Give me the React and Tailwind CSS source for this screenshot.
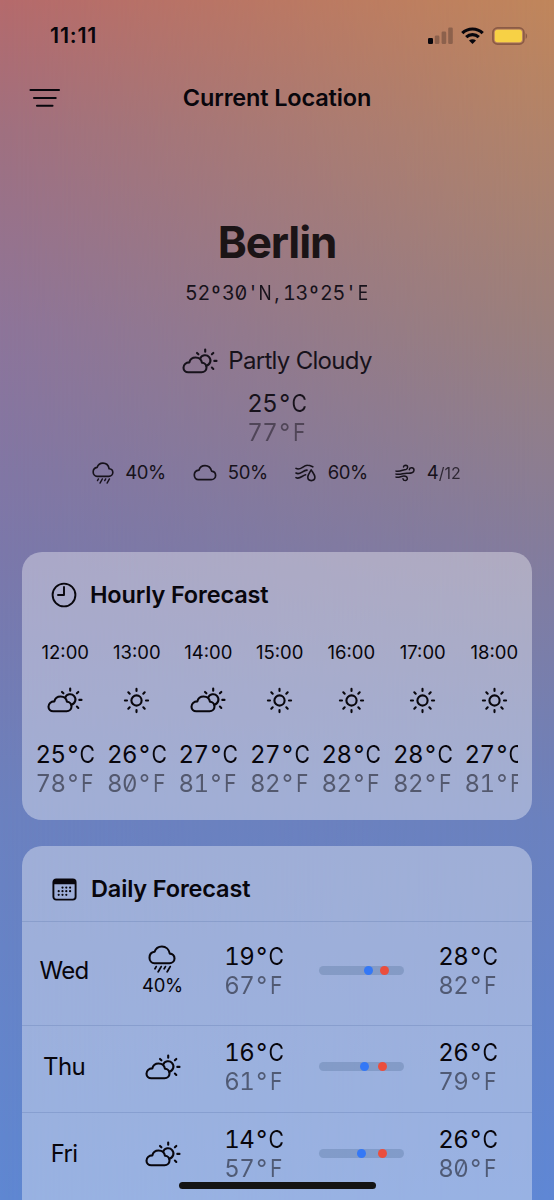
import { clsx } from 'clsx';

const current = {
  city: 'Berlin',
  coords: "52º30'N,13º25'E",
  condition: 'Partly Cloudy',
  c: 25,
  f: 77
};

const hours = [
  { time: '12:00', icon: 'partly', c: 25, f: 78 },
  { time: '13:00', icon: 'sun', c: 26, f: 80 },
  { time: '14:00', icon: 'partly', c: 27, f: 81 },
  { time: '15:00', icon: 'sun', c: 27, f: 82 },
  { time: '16:00', icon: 'sun', c: 28, f: 82 },
  { time: '17:00', icon: 'sun', c: 28, f: 82 },
  { time: '18:00', icon: 'sun', c: 27, f: 81 }
];

const days = [
  { name: 'Wed', icon: 'rain', chance: '40%', low: [19, 67], high: [28, 82], range: [53, 72.6] },
  { name: 'Thu', icon: 'partly', low: [16, 61], high: [26, 79], range: [48.6, 70] },
  { name: 'Fri', icon: 'partly', low: [14, 57], high: [26, 80], range: [45.8, 70.4] }
];

const stroke = {
  fill: 'none',
  stroke: 'currentColor',
  strokeWidth: 2.1,
  strokeLinecap: 'round',
  strokeLinejoin: 'round'
};

function PartlyCloudyIcon() {
  return (
    <svg width="36" height="26" viewBox="0 0 36 26" {...stroke} className="shrink-0">
      <path d="M6.2 24.2H19.6C22.4 24.2 24.5 22.1 24.5 19.5C24.5 17 22.6 15 20 14.8C19.4 11.7 16.8 9.5 13.6 9.5C10.4 9.5 8 11.5 7.3 14.4C3.9 14.5 1.5 16.6 1.5 19.7C1.5 22.3 3.6 24.2 6.2 24.2Z" />
      <path d="M18.2 10.6A5.3 5.3 0 1 1 24.3 17.7" />
      <path d="M23.2 1.6V3.7M15 4.9L16.4 6.3M31.3 4.9L29.9 6.3M32.3 12.9H34.5M29.9 19.5L31.3 20.9" />
    </svg>
  );
}

function SunIcon() {
  return (
    <svg width="27" height="27" viewBox="0 0 27 27" {...stroke}>
      <circle cx="13.5" cy="13.5" r="5.1" />
      <path d="M13.5 1.9V4M13.5 23V25.1M1.9 13.5H4M23 13.5H25.1M5.3 5.3L6.7 6.7M20.3 20.3L21.7 21.7M5.3 21.7L6.7 20.3M20.3 6.7L21.7 5.3" />
    </svg>
  );
}

function RainIcon({ small }) {
  return (
    <svg width={small ? 22 : 28} height={small ? 22 : 28} viewBox="0 0 28 28" {...stroke}>
      <path d="M6.4 18.2H21.4C24.2 18.2 26.5 16.1 26.5 13.4C26.5 10.7 24.4 8.8 21.8 8.6C21 4.4 17.8 1.5 13.9 1.5C10.3 1.5 7.6 3.7 6.6 6.8C3.5 7.2 1.5 9.5 1.5 12.7C1.5 15.8 3.7 18.2 6.4 18.2Z" />
      <path d="M8.2 21.6L7 23.7M13.2 21.6L10.2 26.8M17.4 21.6L16.2 23.7M22.2 21.6L19.2 26.8" strokeWidth="1.8" />
    </svg>
  );
}

function CloudIcon() {
  return (
    <svg width="24" height="18" viewBox="0 0 24 18" {...stroke} strokeWidth="1.7">
      <path d="M5.4 15.6H18.1C20.7 15.6 22.6 13.8 22.6 11.4C22.6 9.1 20.9 7.4 18.6 7.1C17.8 3.8 15.1 1.6 12 1.6C9.1 1.6 6.7 3.4 5.9 6.2C3.1 6.5 1.3 8.4 1.3 11.1C1.3 13.7 3.2 15.6 5.4 15.6Z" />
    </svg>
  );
}

function HumidityIcon() {
  return (
    <svg width="21" height="18" viewBox="0 0 21 18" {...stroke} strokeWidth="1.6">
      <path d="M1 4.4C5.5 7.2 8 1.2 12.5 1.3C14.8 1.3 16 2 17.8 2.8" />
      <path d="M1 9C5 11.6 7.5 6.3 12 6.1" />
      <path d="M1 13.6C4.5 15.8 7 11.6 10.6 10.7" />
      <path d="M16.2 5.9C14.6 8.7 12.8 10.8 12.8 13.1C12.8 15.2 14.2 16.6 16.3 16.6C18.4 16.6 19.9 15.2 19.9 13.1C19.9 10.8 17.9 8.7 16.2 5.9Z" />
    </svg>
  );
}

function WindIcon() {
  return (
    <svg width="20" height="18" viewBox="0 0 20 18" {...stroke} strokeWidth="1.5">
      <path d="M1 7.1C5 8.2 8 5.6 11 5.4C13 5.1 13.4 1.3 10.7 1.2C9.4 1.2 8.7 1.9 8.5 2.9" />
      <path d="M1 10.1C5 11.2 8.5 9 12 9.2C16 9.5 19 8.7 19 6.3C19 3.2 14.8 3.1 14.3 5.7" />
      <path d="M1 13.1C4 14 6 12 9 12C13.4 12 13 16.6 10.3 16.6C9 16.6 8.2 15.8 8 14.8" />
    </svg>
  );
}

function ClockIcon() {
  return (
    <svg width="26" height="26" viewBox="0 0 26 26" {...stroke} strokeWidth="1.9">
      <circle cx="13" cy="13" r="11.4" />
      <path d="M13 5V13H7" />
    </svg>
  );
}

function CalendarIcon() {
  const dots = [
    [10.5, 9.6], [14.3, 9.6], [18.1, 9.6],
    [6.7, 13.2], [10.5, 13.2], [14.3, 13.2], [18.1, 13.2],
    [6.7, 16.8], [10.5, 16.8], [14.3, 16.8]
  ];
  return (
    <svg width="25" height="23" viewBox="0 0 25 23">
      <rect x="1.4" y="1.4" width="22.2" height="20.2" rx="2.8" {...stroke} strokeWidth="1.9" />
      <path d="M1.4 6.2V4A2.8 2.8 0 0 1 4.2 1.2H20.8A2.8 2.8 0 0 1 23.6 4V6.2Z" fill="currentColor" />
      {dots.map(([x, y]) => (
        <circle key={`${x}-${y}`} cx={x} cy={y} r="1.1" fill="currentColor" />
      ))}
    </svg>
  );
}

function WeatherIcon({ name }) {
  if (name === 'sun') return <SunIcon />;
  if (name === 'rain') return <RainIcon />;
  return <PartlyCloudyIcon />;
}

// Tabular digits flow as they are, every other character gets a cell of the same width
function Mono({ text }) {
  return (
    <span className="tracking-[-0.02em] whitespace-nowrap [font-feature-settings:'tnum','zero']">
      {text.split(/([^0-9])/).filter(Boolean).map((part, i) =>
        /[0-9]/.test(part) ? part : (
          <span key={i} className={clsx('inline-flex w-[0.61em] justify-center tracking-normal', /[A-Z]/.test(part) && 'scale-x-88')}>
            {part}
          </span>
        )
      )}
    </span>
  );
}

function Temperature({ c, f }) {
  return (
    <div className="text-[24px] leading-[29px]">
      <div><Mono text={`${c}°C`} /></div>
      <div className="opacity-50"><Mono text={`${f}°F`} /></div>
    </div>
  );
}

function StatusBar() {
  return (
    <div className="flex h-[71px] items-center justify-between pr-[26px] pl-[50px]">
      <span className="text-[21.5px] font-semibold tracking-[0.8px]">11:11</span>
      <div className="flex items-center">
        <svg width="25" height="17" viewBox="0 0 25 17" fill="currentColor">
          <rect x="0" y="11" width="5" height="6" rx="1.3" />
          <g opacity="0.25">
            <rect x="6.8" y="8.5" width="4.6" height="8.5" rx="1.3" />
            <rect x="13.6" y="4.5" width="4.6" height="12.5" rx="1.3" />
            <rect x="20.2" y="0.5" width="4.6" height="16.5" rx="1.3" />
          </g>
        </svg>
        <svg width="23" height="17" viewBox="0 0 23 17" className="ml-2" fill="none" stroke="currentColor" strokeWidth="3.2">
          <path d="M1.3 6.2C7 0.6 16 0.6 21.7 6.2" />
          <path d="M5.2 10.2C8.8 6.8 14.2 6.8 17.8 10.2" />
          <path d="M11.5 17L8 13.4C10 11.7 13 11.7 15 13.4Z" fill="currentColor" stroke="none" />
        </svg>
        <svg width="36" height="18" viewBox="0 0 36 18" className="ml-2">
          <rect x="0.9" y="0.9" width="31" height="16.2" rx="4.6" fill="none" stroke="#8b5b45" strokeWidth="1.7" />
          <rect x="2.8" y="2.7" width="27.2" height="12.6" rx="2.8" fill="#f7d145" />
          <path d="M33.6 6.2C35.6 7 35.6 11 33.6 11.8Z" fill="#8b5b45" />
        </svg>
      </div>
    </div>
  );
}

function Header() {
  return (
    <header className="grid h-[54px] grid-cols-[1fr_auto_1fr] items-center px-[29px]">
      <svg width="32" height="20" viewBox="0 0 32 20" {...stroke}>
        <path d="M1.5 2H30M5 10H26.7M8 17.7H23.5" />
      </svg>
      <h1 className="text-[23.5px] font-semibold tracking-[-0.15px]">Current Location</h1>
    </header>
  );
}

function CurrentWeather() {
  return (
    <section className="flex flex-col items-center text-[#17121b]">
      <h2 className="mt-[89px] text-[44px] leading-[56px] font-bold tracking-[-1.1px] text-[#1b1416]">{current.city}</h2>
      <p className="mt-[11px] text-[19.8px] leading-[24px]"><Mono text={current.coords} /></p>
      <div className="mt-[40px] flex h-8 items-center gap-[10px]">
        <PartlyCloudyIcon />
        <span className="text-[24px] tracking-[-0.7px]">{current.condition}</span>
      </div>
      <div className="mt-[12px]">
        <Temperature c={current.c} f={current.f} />
      </div>
      <div className="mt-[14px] flex h-6 items-center gap-[27px] pr-px text-[18.5px] tracking-[-0.4px]">
        <span className="flex items-center gap-[11px]"><RainIcon small />40%</span>
        <span className="flex items-center gap-[11px]"><CloudIcon />50%</span>
        <span className="flex items-center gap-3"><HumidityIcon />60%</span>
        <span className="flex items-center gap-3">
          <WindIcon />
          <span className="tracking-normal">4<span className="text-[16px] opacity-80">/12</span></span>
        </span>
      </div>
    </section>
  );
}

function HourlyForecast() {
  return (
    <section className="mx-[22px] mt-[67px] h-[268px] rounded-[20px] bg-white/36">
      <div className="flex h-[86px] items-center gap-[13px] pl-[29px]">
        <ClockIcon />
        <h3 className="text-[23.5px] font-semibold tracking-[-0.15px]">Hourly Forecast</h3>
      </div>
      <div className="mr-[14px] ml-[7.5px] flex overflow-hidden">
        {hours.map((hour) => (
          <div key={hour.time} className="flex w-[71.5px] shrink-0 flex-col items-center">
            <div className="h-7 text-[18.5px] leading-7">{hour.time}</div>
            <div className="mt-[14px] mb-[20px] flex h-10 items-center">
              <WeatherIcon name={hour.icon} />
            </div>
            <Temperature c={hour.c} f={hour.f} />
          </div>
        ))}
      </div>
    </section>
  );
}

function RangeBar({ range }) {
  return (
    <div className="relative -mt-0.5 h-[9px] w-[85px] rounded-full bg-[#3c5a82]/25">
      <span className="absolute top-0 size-[9px] rounded-full bg-[#3478f6]" style={{ left: `${range[0]}%` }} />
      <span className="absolute top-0 size-[9px] rounded-full bg-[#eb4e3d]" style={{ left: `${range[1]}%` }} />
    </div>
  );
}

function DailyForecast() {
  return (
    <section className="mx-[22px] mt-[26px] h-[380px] rounded-t-[20px] bg-white/36">
      <div className="flex h-[75px] items-center gap-[14px] pt-[11px] pl-[30px]">
        <CalendarIcon />
        <h3 className="text-[23.5px] font-semibold tracking-[-0.15px]">Daily Forecast</h3>
      </div>
      {days.map((day) => (
        <div
          key={day.name}
          className={clsx(
            'grid grid-cols-[84px_112px_72px_142px_72px] items-center justify-items-center border-t border-[#3c5a96]/20',
            day.chance ? 'h-[104px] pb-[5px]' : 'h-[87px] pb-1'
          )}
        >
          <div className="text-[24px] tracking-[-0.7px]">{day.name}</div>
          <div className="flex flex-col items-center pl-px">
            <WeatherIcon name={day.icon} />
            {day.chance && <span className="text-[18.5px] leading-[25px] tracking-[-0.3px]">{day.chance}</span>}
          </div>
          <Temperature c={day.low[0]} f={day.low[1]} />
          <RangeBar range={day.range} />
          <Temperature c={day.high[0]} f={day.high[1]} />
        </div>
      ))}
    </section>
  );
}

export default function App() {
  return (
    <div className="relative isolate h-[1200px] w-[554px] overflow-hidden bg-[linear-gradient(180deg,#b56a6c_0px,#a07080_130px,#8d759a_330px,#7b78aa_550px,#6b81c0_820px,#5f87d2_1200px)] font-['Inter',sans-serif] text-[#08060c]">
      <div className="absolute inset-0 -z-10 bg-[linear-gradient(180deg,#c0865b_0px,#b0836a_140px,#9a7f7c_330px,#847c9c_550px,#6b81be_820px,#5f87d4_1200px)] [mask-image:linear-gradient(90deg,transparent,black)]" />
      <StatusBar />
      <Header />
      <CurrentWeather />
      <HourlyForecast />
      <DailyForecast />
      <div className="absolute bottom-[11.5px] left-[179px] h-[7px] w-[197px] rounded-full bg-[#141414]" />
    </div>
  );
}
